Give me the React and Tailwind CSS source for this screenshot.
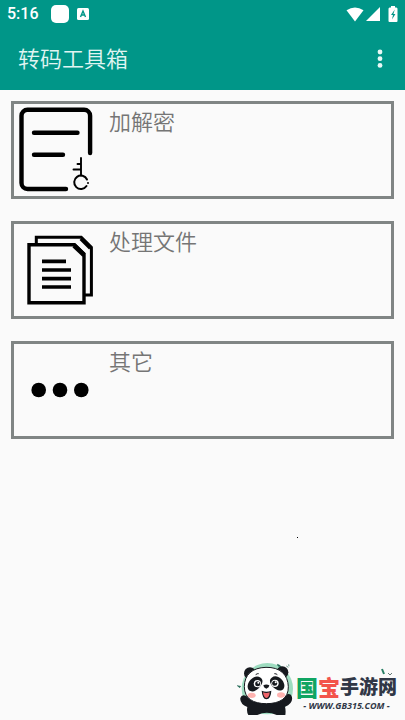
const cards = [
  { title: '加解密', Icon: EncryptIcon },
  { title: '处理文件', Icon: FilesIcon },
  { title: '其它', Icon: MoreIcon },
];

function EncryptIcon() {
  return (
    <svg viewBox="0 0 84 92" className="h-[92px] w-[84px] shrink-0" fill="none" stroke="#000" strokeLinecap="round" aria-hidden="true">
      <path d="M52 85H13.500a6 6 0 0 1-6-6V11.700a6 6 0 0 1 6-6h56.600a6 6 0 0 1 6 6V49" strokeWidth="4.400" />
      <path d="M20 28.700h43.500M20 50.700h29" strokeWidth="4.400" />
      <path d="M67 54v17.500M63.500 60H67M59.500 65.500H67" strokeWidth="1.900" />
      <path d="M73 75.500a6.700 6.700 0 1 0-.5 6.500" strokeWidth="2" />
      <circle cx="74" cy="79" r="1" fill="#000" stroke="none" />
    </svg>
  );
}

function FilesIcon() {
  return (
    <svg viewBox="0 0 84 92" className="h-[92px] w-[84px] shrink-0" fill="none" stroke="#000" strokeWidth="3.400" aria-hidden="true">
      <path d="M15 20.700h45.500L70 30v48.700H15z" />
      <path d="m60 21.500 10 9.500" strokeWidth="4.600" />
      <path d="M22.300 20v-6.700h44.900l10.200 10v47.800H70" strokeWidth="3" />
      <path d="m67 14.500 9.500 9.500" strokeWidth="4" />
      <path d="M28 37.400h24M28 46h29M28 54.600h29M28 63h29" strokeWidth="3.600" />
    </svg>
  );
}

function MoreIcon() {
  return (
    <svg viewBox="0 0 84 92" className="h-[92px] w-[84px] shrink-0" aria-hidden="true">
      <circle cx="24.700" cy="46" r="7.300" />
      <circle cx="46" cy="46" r="7.300" />
      <circle cx="67.300" cy="46" r="7.300" />
    </svg>
  );
}

function StatusBar() {
  return (
    <div className="flex h-7 items-center pr-[7px] pl-[7px] text-white">
      <span className="font-[Roboto,sans-serif] text-base font-medium">5:16</span>
      <span className="ml-3 size-[18px] rounded-[5px] bg-white" />
      <svg viewBox="0 0 12 12" className="ml-2 size-3" aria-hidden="true">
        <rect width="12" height="12" rx="1.500" fill="#fff" />
        <path d="M3.500 9 6 3l2.500 6M4.500 7h3" fill="none" stroke="#009688" strokeWidth="1.400" />
      </svg>
      <svg viewBox="0 0 18 15" className="ml-auto h-[15px] w-[18px]" fill="#fff" aria-hidden="true">
        <path d="M.5 3.300Q9-2.500 17.500 3.300L9 14.500z" />
      </svg>
      <svg viewBox="0 0 14 14" className="ml-0.5 size-3.5" fill="#fff" aria-hidden="true">
        <path d="M14 0v14H0z" />
      </svg>
      <svg viewBox="0 0 10 16" className="ml-2 h-4 w-2.5" aria-hidden="true">
        <path d="M3 0h4v1.500h1.500l1 1V15a1 1 0 0 1-1 1h-7a1 1 0 0 1-1-1V2.500l1-1H3z" fill="#fff" />
        <path d="M6.800 3.500 3 9h2l-1 4.500L7.400 8h-2z" fill="#009688" />
      </svg>
    </div>
  );
}

function Panda() {
  return (
    <svg viewBox="0 0 180 168" className="h-14 w-[60px] shrink-0" aria-hidden="true">
      <circle cx="94" cy="86" r="77" fill="#9edcc0" />
      <path d="M124 13q9 2 13 9l-11-4zM4 77l10 2-3 4zM151 18l6 4M158 13l1 6" fill="#256b57" stroke="#256b57" strokeWidth="2" />
      <circle cx="42" cy="40" r="18" fill="#16191e" />
      <circle cx="139" cy="37" r="18" fill="#16191e" />
      <path d="M37 112Q18 99 13 114q-2 17 21 27-3 15 3 24h27q28-13 58 0h26q2-14-1-25 24-10 21-28-4-18-26-4z" fill="#16191e" />
      <path d="M90 22c42-1 66 22 67 58 1 36-27 51-66 51S25 116 25 80s24-57 65-58z" fill="#fff" stroke="#16191e" strokeWidth="3" />
      <path d="M74 53C58 43 38 58 35 77c-2 16 13 22 25 14 12-8 28-27 14-38z" fill="#16191e" />
      <path d="M107 53c14-11 34 3 38 21 2 17-13 22-25 14-12-8-26-25-13-35z" fill="#16191e" />
      <circle cx="64" cy="71" r="11" fill="#fff" />
      <circle cx="65" cy="71" r="7.500" fill="#16191e" />
      <circle cx="117" cy="70" r="11" fill="#fff" />
      <circle cx="116" cy="70" r="7.500" fill="#16191e" />
      <circle cx="67" cy="68" r="3" fill="#fff" />
      <circle cx="119" cy="67" r="3" fill="#fff" />
      <path d="M82 76q9-5 18 0 0 7-9 10-9-3-9-10z" fill="#16191e" />
      <path d="M77 92q14 6 29 0-1 24-15 26-12-2-14-26z" fill="#16191e" />
      <path d="M81 97q10 4 20 0-1 16-10 17-8-1-10-17z" fill="#f0646a" />
      <path d="M59 44q5-4 9-3M115 41q6 0 9 3" fill="none" stroke="#16191e" strokeWidth="3" />
      <ellipse cx="47" cy="106" rx="12" ry="8" fill="#ffb3b0" />
      <ellipse cx="135" cy="105" rx="12" ry="8" fill="#ffb3b0" />
    </svg>
  );
}

function Brand() {
  return (
    <footer className="mt-auto flex items-start justify-end pr-2 pb-1">
      <Panda />
      <div className="relative flex flex-col items-center pt-3">
        <svg viewBox="0 0 12 8" className="absolute top-2 right-1 h-2 w-3" fill="none" stroke="#287f65" aria-hidden="true">
          <path d="m1 1 2 5" strokeWidth="2" />
          <path d="m7 5 2 2 2-2" stroke="#647a76" />
        </svg>
        <div className="flex items-center font-['Noto_Sans_CJK_SC',sans-serif] leading-7 font-black text-[#303746] [font-style:oblique_6deg]">
          <span className="text-[22px] text-[#10a562]">国</span>
          <span className="text-[22px] text-[#f3534b]">宝</span>
          <span className="text-[19px]">手游网</span>
        </div>
        <span className="font-['Open_Sans',sans-serif] text-[9px] leading-3 font-bold text-[#303746] italic">- WWW.GB315.COM -</span>
      </div>
    </footer>
  );
}

export default function App() {
  return (
    <div className="relative flex min-h-screen flex-col bg-[#fafafa] font-['Noto_Sans_CJK_SC',sans-serif]">
      <header className="bg-[#009688]">
        <StatusBar />
        <div className="flex h-[62px] items-center justify-between pr-[13px] pl-[18px]">
          <h1 className="pb-1 text-[22px] leading-8 font-[350] text-[#e0f5f2]">转码工具箱</h1>
          <button type="button" aria-label="更多选项" className="flex h-10 w-6 items-center justify-center">
            <svg viewBox="0 0 6 20" className="h-5 w-1.5" fill="#e8f8f6" aria-hidden="true">
              <circle cx="3" cy="3" r="2.400" />
              <circle cx="3" cy="9.700" r="2.400" />
              <circle cx="3" cy="16.400" r="2.400" />
            </svg>
          </button>
        </div>
      </header>

      <main className="flex flex-col gap-[22px] px-[11px] pt-[11px]">
        {cards.map(({ title, Icon }) => (
          <button key={title} type="button" className="flex items-start border-3 border-[#808584] text-left">
            <Icon />
            <span className="ml-[11px] text-[22px] leading-8 font-[350] text-[#757575]">{title}</span>
          </button>
        ))}
      </main>

      <span className="absolute right-[107px] bottom-[182px] size-px bg-black" />
      <Brand />
    </div>
  );
}
